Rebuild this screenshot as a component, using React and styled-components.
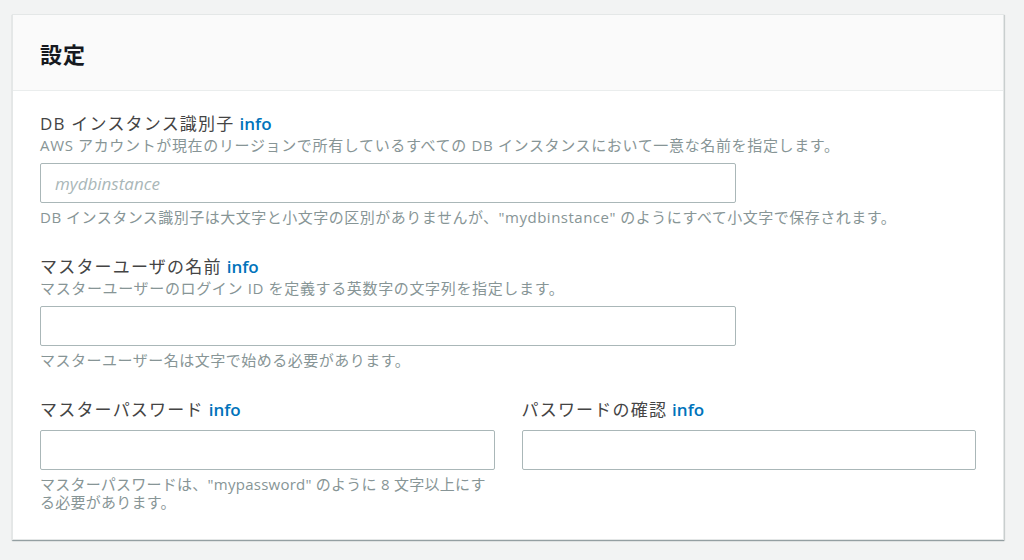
import React from 'react'
import styled, { createGlobalStyle } from 'styled-components'

const GlobalStyle = createGlobalStyle`
  html, body {
    margin: 0;
    padding: 0;
    background: #f2f3f3;
  }
  body {
    font-family: "Open Sans", "Noto Sans CJK JP", sans-serif;
    color: #444;
  }
`

const Page = styled.div`
  padding: 14px 20px 19px 12px;
`

const Card = styled.section`
  background: #fff;
  border: 1px solid #e4e7e7;
  box-shadow: 0 1px 1px 0 rgba(0, 28, 36, 0.3), 1px 1px 1px 0 rgba(0, 28, 36, 0.12);
`

const Header = styled.div`
  height: 75px;
  display: flex;
  align-items: center;
  padding: 0 27px;
  background: #fafafa;
  border-bottom: 1px solid #eaeded;
`

const Title = styled.h2`
  margin: 0;
  font-size: 22px;
  font-weight: 700;
  letter-spacing: 1px;
  color: #16191f;
`

const Body = styled.div`
  display: flex;
  flex-direction: column;
  gap: 30px;
  padding: 22px 27px 28px 27px;
`

const Row = styled.div`
  display: grid;
  grid-template-columns: 1fr 1fr;
  column-gap: 27px;
`

const Field = styled.div`
  display: flex;
  flex-direction: column;
`

const Label = styled.div`
  font-size: 17px;
  line-height: 22px;
  letter-spacing: 1.2px;
  color: #444;
`

const Info = styled.a`
  color: #0073bb;
  font-weight: 600;
  margin-left: 5px;
  letter-spacing: 0;
  text-decoration: none;
`

const Desc = styled.div`
  font-size: 15px;
  line-height: 20px;
  color: #879596;
  letter-spacing: 0.65px;
  white-space: nowrap;
`

const Input = styled.input`
  box-sizing: border-box;
  width: ${(p) => p.$width || '100%'};
  height: 40px;
  margin-top: ${(p) => p.$gap || 8}px;
  padding: 0 14px;
  border: 1px solid #aab7b8;
  border-radius: 2px;
  font-family: "Open Sans", "Noto Sans CJK JP", sans-serif;
  font-size: 17px;
  color: #444;
  outline: none;
  &::placeholder {
    color: #aab7b8;
    font-style: italic;
  }
`

const Hint = styled.div`
  margin-top: 5px;
  font-size: 15px;
  line-height: 18px;
  color: #879596;
  letter-spacing: ${(p) => p.$spacing ?? 0.5}px;
`

export default function App() {
  return (
    <>
      <GlobalStyle />
      <Page>
        <Card>
          <Header>
            <Title>設定</Title>
          </Header>
          <Body>
            <Field>
              <Label>
                DB インスタンス識別子<Info href="#">info</Info>
              </Label>
              <Desc>AWS アカウントが現在のリージョンで所有しているすべての DB インスタンスにおいて一意な名前を指定します。</Desc>
              <Input $width="696px" placeholder="mydbinstance" />
              <Hint>DB インスタンス識別子は大文字と小文字の区別がありませんが、"mydbinstance" のようにすべて小文字で保存されます。</Hint>
            </Field>

            <Field>
              <Label>
                マスターユーザの名前<Info href="#">info</Info>
              </Label>
              <Desc>マスターユーザーのログイン ID を定義する英数字の文字列を指定します。</Desc>
              <Input $width="696px" />
              <Hint>マスターユーザー名は文字で始める必要があります。</Hint>
            </Field>

            <Row>
              <Field>
                <Label>
                  マスターパスワード<Info href="#">info</Info>
                </Label>
                <Input type="password" $gap={9} />
                <Hint $spacing={0.25}>マスターパスワードは、"mypassword" のように 8 文字以上にする必要があります。</Hint>
              </Field>
              <Field>
                <Label>
                  パスワードの確認<Info href="#">info</Info>
                </Label>
                <Input type="password" $gap={9} />
              </Field>
            </Row>
          </Body>
        </Card>
      </Page>
    </>
  )
}
